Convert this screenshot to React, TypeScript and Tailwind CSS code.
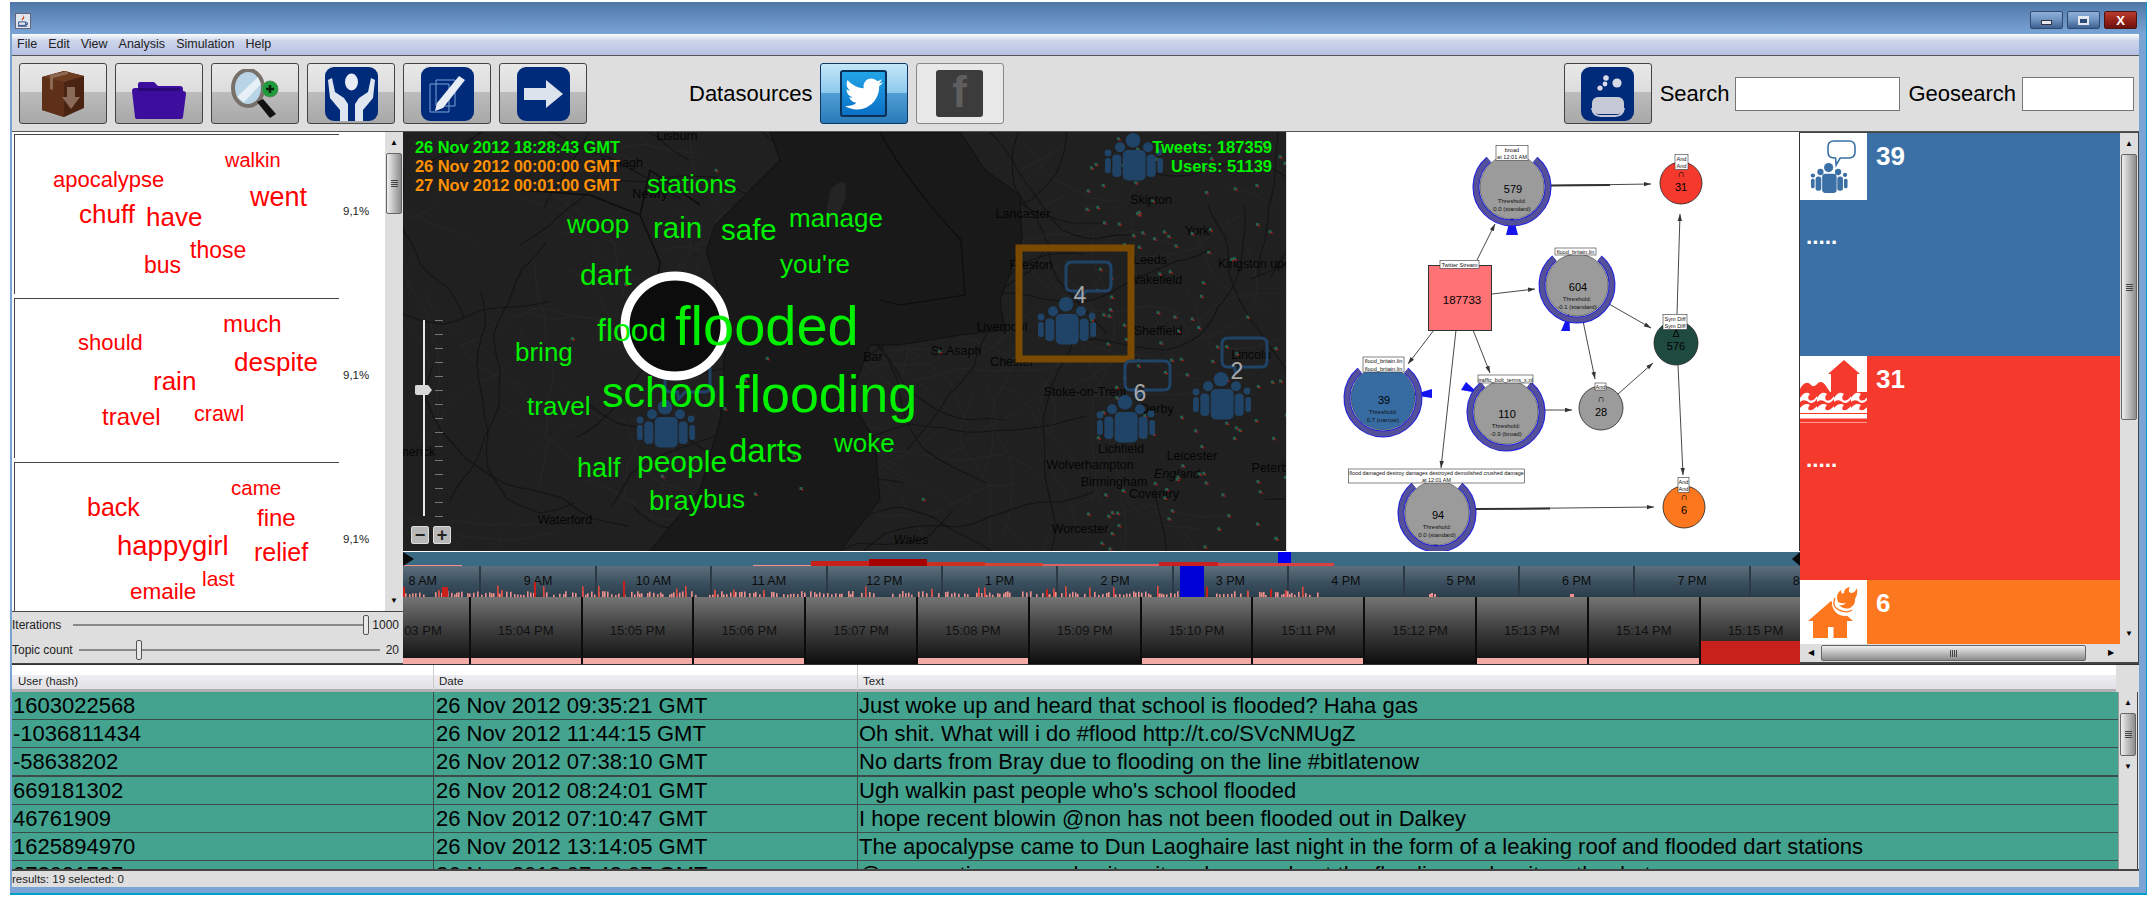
import React from 'react';
import { FaTwitter } from 'react-icons/fa';

// seeded random so the chart and map stay the same on every load
const seeded = (seed: number) => () => {
  seed = (seed * 16807) % 2147483647;
  return (seed - 1) / 2147483646;
};

type Word = [string, number, number, number];

const topics: Word[][] = [
  [['walkin', 210, 32, 20], ['apocalypse', 38, 53, 22], ['went', 235, 72, 27], ['chuff', 64, 88, 26], ['have', 131, 91, 26], ['those', 175, 123, 23], ['bus', 129, 138, 23]],
  [['much', 208, 33, 24], ['should', 63, 52, 22], ['despite', 219, 72, 26], ['rain', 138, 91, 26], ['crawl', 179, 123, 21.5], ['travel', 87, 126, 24]],
  [['came', 216, 32, 20.5], ['back', 72, 53, 25], ['fine', 242, 63, 24], ['happygirl', 102, 92, 27.5], ['relief', 239, 98, 25], ['last', 187, 123, 21], ['emaile', 115, 137, 22.5]],
];

// x, baseline, size, in page pixels
const mapWords: Word[] = [
  ['stations', 647, 193, 26], ['woop', 567, 233, 26], ['rain', 653, 238, 29.5], ['safe', 721, 240, 29.5], ['manage', 789, 227, 26],
  ["you're", 780, 273, 26], ['dart', 580, 285, 30], ['flood', 597, 341, 32], ['flooded', 675, 345, 56], ['bring', 515, 361, 26],
  ['school', 602, 407, 43], ['flooding', 735, 412, 52], ['travel', 527, 415, 26], ['darts', 729, 462, 33], ['woke', 834, 452, 26],
  ['half', 577, 478, 27], ['people', 637, 472, 30], ['bray', 649, 510, 27.5], ['bus', 703, 508, 26],
];

const mapLabels: [string, number, number, string?][] = [
  ['Lisburn', 677, 140], ['Armagh', 621, 167], ['Newry', 650, 198], ['Limerick', 412, 456], ['Waterford', 565, 524], ['Bar', 873, 361],
  ['Lancaster', 1023, 218], ['Preston', 1031, 269], ['Liverpool', 1002, 331], ['St.Asaph', 956, 355], ['Chester', 1012, 366],
  ['Stoke-on-Trent', 1085, 396], ['Derby', 1157, 413], ['Lichfield', 1121, 453], ['Leicester', 1192, 460], ['England', 1177, 478, 'i'],
  ['Wolverhampton', 1090, 469], ['Birmingham', 1114, 486], ['Coventry', 1154, 498], ['Worcester', 1080, 533], ['Wales', 911, 544, 'i'],
  ['Leeds', 1150, 264], ['Wakefield', 1155, 284], ['Sheffield', 1158, 335], ['York', 1197, 235], ['Kingston upon', 1258, 268],
  ['Lincoln', 1251, 359], ['Peterb', 1270, 472], ['Skipton', 1151, 204],
];

const tweets = [
  ['1603022568', '26 Nov 2012 09:35:21 GMT', 'Just woke up and heard that school is flooded? Haha gas'],
  ['-1036811434', '26 Nov 2012 11:44:15 GMT', 'Oh shit. What will i do #flood http://t.co/SVcNMUgZ'],
  ['-58638202', '26 Nov 2012 07:38:10 GMT', 'No darts from Bray due to flooding on the line #bitlatenow'],
  ['669181302', '26 Nov 2012 08:24:01 GMT', "Ugh walkin past people who's school flooded"],
  ['46761909', '26 Nov 2012 07:10:47 GMT', 'I hope recent blowin @non has not been flooded out in Dalkey'],
  ['1625894970', '26 Nov 2012 13:14:05 GMT', 'The apocalypse came to Dun Laoghaire last night in the form of a leaking roof and flooded dart stations'],
  ['078091797', '26 Nov 2012 07:48:07 GMT', '@non continues people sit on it and moan about the flooding and wait on the dart'],
];

const hours = ['8 AM', '9 AM', '10 AM', '11 AM', '12 PM', '1 PM', '2 PM', '3 PM', '4 PM', '5 PM', '6 PM', '7 PM', '8 PM'];
const minutes: [string, 'pink' | 'none' | 'red'][] = [
  ['15:03 PM', 'pink'], ['15:04 PM', 'pink'], ['15:05 PM', 'pink'], ['15:06 PM', 'pink'], ['15:07 PM', 'none'], ['15:08 PM', 'pink'],
  ['15:09 PM', 'none'], ['15:10 PM', 'pink'], ['15:11 PM', 'pink'], ['15:12 PM', 'none'], ['15:13 PM', 'pink'], ['15:14 PM', 'pink'], ['15:15 PM', 'red'],
];

const People = ({ x, y, s = 1, color = '#1f4468' }: { x: number; y: number; s?: number; color?: string }) => (
  <g transform={`translate(${x} ${y}) scale(${s})`} fill={color}>
    <circle cx="28" cy="7.3" r="7.3" />
    <circle cx="15" cy="14.3" r="5" />
    <circle cx="43" cy="14.3" r="5" />
    <circle cx="3" cy="20" r="3.4" />
    <circle cx="54" cy="19" r="3.4" />
    <rect x="17.7" y="17" width="23" height="30.5" rx="5" />
    <rect x="7.3" y="21.5" width="9" height="22.5" rx="4" />
    <rect x="41.7" y="21.5" width="9" height="22.5" rx="4" />
    <rect x="0" y="25" width="5.7" height="15" rx="2.5" />
    <rect x="52.3" y="25" width="5.7" height="15" rx="2.5" />
  </g>
);

const Bubble = ({ x, y, w = 45, h = 29, sw = 3, color = '#1f4468' }: { x: number; y: number; w?: number; h?: number; sw?: number; color?: string }) => (
  <path
    d={`M${x + 6} ${y}H${x + w - 6}Q${x + w} ${y} ${x + w} ${y + 6}V${y + h - 6}Q${x + w} ${y + h} ${x + w - 6} ${y + h}H${x + w * 0.45}L${x + w * 0.3} ${y + h + 7}L${x + w * 0.28} ${y + h}H${x + 6}Q${x} ${y + h} ${x} ${y + h - 6}V${y + 6}Q${x} ${y} ${x + 6} ${y}Z`}
    fill="none"
    stroke={color}
    strokeWidth={sw}
  />
);

const MapArt = () => {
  const r = seeded(4711);
  const wander = (n: number, step: number) => {
    let x = 403 + r() * 883;
    let y = 132 + r() * 419;
    let a = r() * 6.28;
    let d = `M${x.toFixed(0)} ${y.toFixed(0)}`;
    for (let i = 0; i < n; i++) {
      a += (r() - 0.5) * 0.9;
      const mx = x + Math.cos(a) * step;
      const my = y + Math.sin(a) * step;
      a += (r() - 0.5) * 0.9;
      x = mx + Math.cos(a) * step;
      y = my + Math.sin(a) * step;
      d += `Q${mx.toFixed(0)} ${my.toFixed(0)} ${x.toFixed(0)} ${y.toFixed(0)}`;
    }
    return d;
  };
  const light = Array.from({ length: 110 }, () => wander(6, 14));
  const dark = Array.from({ length: 40 }, () => wander(8, 18));
  const specks = Array.from({ length: 130 }, () => [1085 + r() * 200, 135 + r() * 415]);
  const westSpecks = Array.from({ length: 14 }, () => [560 + r() * 400, 135 + r() * 400]);
  return (
    <svg className="absolute inset-0" width="883" height="419" viewBox="403 132 883 419">
      <rect x="403" y="132" width="883" height="419" fill="#202020" />
      <g fill="none">
        {light.map((d, i) => <path key={i} d={d} stroke="#282828" strokeWidth="0.8" />)}
        {dark.map((d, i) => <path key={i} d={d} stroke="#141414" strokeWidth="1.1" />)}
      </g>
      <path d="M770 132L960 132L985 170L1020 195L1022 240L1000 300L1005 330L960 335L900 345L870 345L850 400L875 440L880 500L840 551L650 551L700 490L720 420L727 320L706 250L715 225L780 160Z" fill="#191919" stroke="#111" />
      <path d="M830 190Q850 170 845 200Q835 225 825 220Z" fill="#242424" />
      <path d="M880 132Q905 180 961 240L965 295L900 305L880 300" fill="none" stroke="#0d0d0d" strokeWidth="1.2" />
      <path d="M520 190L590 195L640 215L650 170L700 205M640 215L660 262L655 300" fill="none" stroke="#0e0e0e" strokeWidth="1.6" />
      {mapLabels.map(([t, x, y, k]) => (
        <text key={t} x={x} y={y} textAnchor="middle" fontSize="12.5" fill="#050505" fontStyle={k ? 'italic' : 'normal'}>{t}</text>
      ))}
      {[...specks, ...westSpecks].map(([x, y], i) => (
        <g key={i}>
          <rect x={x} y={y} width="3" height="3" fill="#24604f" />
          <rect x={x + 2} y={y + 2} width="2" height="1.5" fill="#a81c1c" />
        </g>
      ))}
      <Bubble x={665} y={363} />
      {/* focus circle */}
      <circle cx="675" cy="326" r="50" fill="#0c0c0c" stroke="#fff" strokeWidth="9" />
      {/* markers */}
      <People x={637} y={400} />
      <People x={1105} y={133} />
      <rect x="1019" y="248" width="112" height="111" fill="none" stroke="#7a4a00" strokeWidth="7" />
      <Bubble x={1066} y={262} />
      <People x={1038} y={297} />
      <Bubble x={1125} y={361} />
      <People x={1097} y={395} />
      <Bubble x={1222} y={338} />
      <People x={1193} y={372} />
      <g fill="#a8a8a8" fontSize="23" textAnchor="middle">
        <text x="1080" y="303">4</text>
        <text x="1140" y="401">6</text>
        <text x="1237" y="379">2</text>
      </g>
      {/* zoom slider */}
      <rect x="423" y="320" width="2" height="196" fill="#e6e6e6" />
      {Array.from({ length: 15 }, (_, i) => (
        <rect key={i} x="435" y={320 + i * 14} width="8" height="1" fill="#777" />
      ))}
      <path d="M415 386Q415 385 417 385H428L432 390L428 395H417Q415 395 415 393Z" fill="#d8d8d8" />
    </svg>
  );
};

const ringArc = (cx: number, cy: number, r: number) => {
  const dx = r * Math.sin(0.7);
  const dy = r * Math.cos(0.7);
  return `M${cx + dx} ${cy - dy}A${r} ${r} 0 1 1 ${cx - dx} ${cy - dy}`;
};

const Threshold = ({ cx, cy, r, fill, n, a, b }: { cx: number; cy: number; r: number; fill: string; n: string; a: string; b: string }) => (
  <g>
    <path d={ringArc(cx, cy, r + 4)} fill="none" stroke="#2020e0" strokeWidth="7" />
    <path d={ringArc(cx, cy, r + 4)} fill="none" stroke="#55509a" strokeWidth="5" />
    <circle cx={cx} cy={cy} r={r} fill={fill} stroke="#222" strokeWidth="0.5" />
    <text x={cx + 1} y={cy + 6} textAnchor="middle" fontSize="11" fill="#000">{n}</text>
    <text x={cx} y={cy + 16} textAnchor="middle" fontSize="6" fill="#111">{a}</text>
    <text x={cx} y={cy + 24} textAnchor="middle" fontSize="6" fill="#111">{b}</text>
  </g>
);

const SetNode = ({ cx, cy, r, fill, sym, n, symY, nY }: { cx: number; cy: number; r: number; fill: string; sym: string; n: string; symY: number; nY: number }) => (
  <g>
    <circle cx={cx} cy={cy} r={r} fill={fill} stroke="#222" strokeWidth="0.8" />
    <text x={cx} y={symY} textAnchor="middle" fontSize="10" fill="#000">{sym}</text>
    <text x={cx} y={nY} textAnchor="middle" fontSize="11" fill="#000">{n}</text>
  </g>
);

const Label = ({ x, y, w, h, lines }: { x: number; y: number; w: number; h: number; lines: string[] }) => (
  <g>
    <rect x={x} y={y} width={w} height={h} fill="#fff" stroke="#333" strokeWidth="0.6" />
    {lines.map((t, i) => (
      <text key={i} x={x + w / 2} y={y + (h / lines.length) * (i + 1) - 1.5} textAnchor="middle" fontSize={w > 150 ? 5.4 : 5.6} fill="#111">{t}</text>
    ))}
  </g>
);

const Edge = ({ x1, y1, x2, y2 }: { x1: number; y1: number; x2: number; y2: number }) => {
  const a = Math.atan2(y2 - y1, x2 - x1);
  const p = (d: number, o: number) => `${x2 - Math.cos(a) * d - Math.sin(a) * o} ${y2 - Math.sin(a) * d + Math.cos(a) * o}`;
  return (
    <g>
      <line x1={x1} y1={y1} x2={x2} y2={y2} stroke="#333" strokeWidth="0.9" />
      <path d={`M${x2} ${y2}L${p(7, 2.2)}L${p(7, -2.2)}Z`} fill="#333" />
    </g>
  );
};

const Diagram = () => (
  <svg width="509" height="419" viewBox="0 2 509 419" className="block">
    <Edge x1={261} y1={55.5} x2={361} y2={54} />
    <line x1="261" y1="55.5" x2="320" y2="55" stroke="#333" strokeWidth="2" />
    <Edge x1={187} y1={130} x2={205} y2={94} />
    <Edge x1={202} y1={164} x2={245} y2={159} />
    <Edge x1={144} y1={200} x2={118} y2={234} />
    <Edge x1={183} y1={200} x2={200} y2={243} />
    <Edge x1={166} y1={200} x2={151} y2={338} />
    <Edge x1={293} y1={191} x2={305} y2={249} />
    <Edge x1={319} y1={174} x2={361} y2={198} />
    <Edge x1={254} y1={280} x2={282} y2={280} />
    <Edge x1={328} y1={264} x2={363} y2={233} />
    <Edge x1={387} y1={184} x2={390} y2={84} />
    <Edge x1={388} y1={235} x2={393} y2={345} />
    <Edge x1={185} y1={379} x2={364} y2={377} />
    <line x1="185" y1="379" x2="260" y2="378.5" stroke="#333" strokeWidth="2" />

    <rect x="138.5" y="135.5" width="63" height="65" fill="#ff7276" stroke="#333" />
    <text x="172" y="174" textAnchor="middle" fontSize="11.5" fill="#000">187733</text>
    <Label x={150} y={130.5} w={39} h={8} lines={['Twitter Stream']} />

    <path d="M222 82L216 105H228Z" fill="#1414f0" />
    <Threshold cx={222} cy={57} r={32} fill="#9b9b9b" n="579" a="Threshold:" b="0.0 (standard)" />
    <Label x={206} y={15.5} w={32} h={15} lines={['broad', 'at 12:01 AM']} />

    <path d="M279 182L271 201H280Z" fill="#1414f0" />
    <Threshold cx={287} cy={155} r={31} fill="#9b9b9b" n="604" a="Threshold:" b="-0.1 (standard)" />
    <Label x={265} y={118} w={41} h={7} lines={['flood_britain.lin']} />

    <path d="M122 265L142 259V268Z" fill="#1414f0" />
    <Threshold cx={93} cy={268} r={32} fill="#376ca3" n="39" a="Threshold:" b="0.7 (narrow)" />
    <Label x={73} y={227} w={41} h={15} lines={['flood_britain.lin', 'flood_britain.lin']} />

    <path d="M188 263L176 252L171 260Z" fill="#1414f0" />
    <Threshold cx={216} cy={282} r={32} fill="#9b9b9b" n="110" a="Threshold:" b="-0.9 (broad)" />
    <Label x={188} y={245} w={55} h={8} lines={['traffic_bolt_terms_x.nl']} />

    <SetNode cx={311} cy={278} r={22} fill="#9b9b9b" sym="∩" n="28" symY={272} nY={286} />
    <Label x={305} y={253} w={11} h={7} lines={['And']} />

    <path d="M146 408L142 421H150Z" fill="#1414f0" />
    <Threshold cx={147} cy={383} r={32} fill="#9b9b9b" n="94" a="Threshold:" b="0.0 (standard)" />
    <Label x={58.5} y={339} w={176} h={14} lines={['flood damaged destroy damages destroyed demolished crushed damage', 'at 12:01 AM']} />

    <SetNode cx={391} cy={53} r={21} fill="#f5392d" sym="∩" n="31" symY={47} nY={61} />
    <Label x={385} y={24.5} w={13} h={15} lines={['And', 'And']} />
    <SetNode cx={386} cy={213} r={22} fill="#1e4a40" sym="Δ" n="576" symY={207} nY={220} />
    <Label x={373} y={184.5} w={24} h={15} lines={['Sym Diff', 'Sym Diff']} />
    <SetNode cx={394} cy={377} r={21} fill="#fd771f" sym="∩" n="6" symY={370} nY={384} />
    <Label x={388} y={347.5} w={11} h={15} lines={['And', 'And']} />
  </svg>
);

const Scrollbar = ({ thumb }: { thumb: string }) => (
  <div className="w-[18px] shrink-0 flex flex-col items-center bg-[#dedede] text-[8px] text-black leading-none">
    <div className="h-[21px] w-full flex items-center justify-center">▲</div>
    <div className={`${thumb} w-[16px] rounded-[2px] border border-[#666] bg-[linear-gradient(90deg,#eeeeee,#b8b8b8_55%,#8c8c8c)] flex flex-col items-center justify-center gap-[1px]`}>
      {[0, 1, 2, 3].map((i) => <div key={i} className="h-[1px] w-[7px] bg-[#444]" />)}
    </div>
    <div className="flex-1" />
    <div className="h-[21px] w-full flex items-center justify-center">▼</div>
  </div>
);

const Slider = ({ label, value, labelW, valueW, thumb }: { label: string; value: string; labelW: string; valueW: string; thumb: string }) => (
  <div className="h-[25.5px] flex items-center text-[12px] leading-none text-[#222]">
    <div className={`${labelW} shrink-0`}>{label}</div>
    <div className="relative flex-1 h-[2px] bg-[#8a8a8a]">
      <div className={`absolute ${thumb} top-[-9px] h-[20px] w-[6px] rounded-[2px] border border-[#555] bg-[#e8e8e8]`} />
    </div>
    <div className={`${valueW} text-right`}>{value}</div>
  </div>
);

const ToolButton = ({ children, className }: { children: React.ReactNode; className?: string }) => (
  <button className={`w-[88px] h-[61px] shrink-0 flex items-center justify-center rounded-[3px] border border-[#444] bg-[linear-gradient(#e8e8e8_0%,#dcdcdc_48%,#bcbcbc_48%,#a8a8a8_100%)] ${className ?? ''}`}>
    {children}
  </button>
);

const SymbolBox = ({ children }: { children: React.ReactNode }) => (
  <svg width="53" height="54" viewBox="0 0 53 54">
    <rect width="53" height="54" rx="9" fill="#002a7a" />
    {children}
  </svg>
);

const histogram = () => {
  const r = seeded(99);
  const bars: { x: number; h: number; c: string }[] = [];
  for (let x = 403; x < 1320; x += 2 + Math.floor(r() * 3)) {
    if (r() < 0.22) continue;
    bars.push({ x, h: 2 + r() * 4, c: '#f0908c' });
    if (r() < 0.12) bars.push({ x, h: 6 + r() * 6, c: '#e04840' });
  }
  return bars;
};

const Timeline = () => (
  <div className="relative h-[112px] overflow-hidden">
    <div className="h-[14px] bg-[#3b6a85]" />
    <div className="h-[31px] flex -ml-[37px] bg-[linear-gradient(#5e6f7b,#3a4f5e_55%,#2a3d4b)]">
      {hours.map((h) => (
        <div key={h} className="w-[115.4px] shrink-0 border-r-2 border-[#2a3944] flex items-center justify-center text-[12.5px] text-[#0c0c0c] leading-none">
          {h}
        </div>
      ))}
    </div>
    <div className="h-[67px] flex -ml-[44px]">
      {minutes.map(([m, state]) => (
        <div key={m} className="relative w-[111.8px] shrink-0 border-r-2 border-[#0c0c0c] flex items-center justify-center text-[13px] text-[#111] leading-none bg-[linear-gradient(#747474,#3c3c3c_50%,#0e0e0e)]">
          {state === 'pink' && <div className="absolute left-0 right-0 bottom-0 h-[6px] bg-[#f4aaa6]" />}
          {state === 'red' && <div className="absolute left-0 right-0 bottom-0 h-[23px] bg-[#c8201a]" />}
          <span className="relative">{m}</span>
        </div>
      ))}
    </div>
    <svg className="absolute left-0 top-0" width="1397" height="45" viewBox="403 552 1397 45">
      {histogram().map((b, i) => <rect key={i} x={b.x} y={597 - b.h} width="1.6" height={b.h} fill={b.c} />)}
      {[[1429, 3], [1431, 4], [1434, 3], [1570, 3], [1572, 3]].map(([x, h]) => <rect key={x} x={x} y={597 - h} width="2" height={h} fill="#f0908c" />)}
      {[[403, 10], [442, 10], [444, 10], [446, 10], [534, 15], [623, 16], [1046, 8], [1206, 10], [1270, 8]].map(([x, h]) => <rect key={x} x={x} y={597 - h} width="2" height={h} fill="#c8201a" />)}
      <rect x="403" y="565" width="59" height="1" fill="#f0908c" />
      <rect x="753" y="565" width="58" height="1" fill="#f0908c" />
      <rect x="811" y="561" width="58" height="5" fill="#c8201a" />
      <rect x="869" y="559" width="58" height="7" fill="#a80000" />
      <rect x="927" y="562" width="58" height="4" fill="#c83020" />
      <rect x="985" y="563" width="58" height="3" fill="#d84030" />
      <rect x="1043" y="564" width="116" height="2" fill="#e06060" />
      <rect x="1159" y="562" width="59" height="4" fill="#c82020" />
      <rect x="1218" y="563" width="116" height="3" fill="#d84040" />
      <rect x="1180" y="566" width="24" height="31" fill="#0000d8" />
      <rect x="1278" y="552" width="13" height="11" fill="#0000f0" />
      <path d="M403 552L414 559L403 566Z" fill="#0a0a0a" />
      <path d="M1800 552L1792 559L1800 566Z" fill="#0a0a0a" />
    </svg>
  </div>
);

const StatCard = ({ color, count, icon, h, dots }: { color: string; count: string; icon: React.ReactNode; h: string; dots?: boolean }) => (
  <div className={`${h} overflow-hidden ${color} text-white`}>
    <div className="flex">
      <div className="w-[67px] h-[67px] bg-white shrink-0">{icon}</div>
      <div className="pl-[9px] pt-[10px] text-[26px] font-bold leading-none">{count}</div>
    </div>
    {dots && <div className="ml-[6px] mt-[26px] text-[22.5px] font-bold leading-none">.....</div>}
  </div>
);

export default function App() {
  return (
    <div className="w-[2153px] h-[903px] bg-white overflow-hidden pl-[10px] pt-[2px] font-['Liberation_Sans',Arial,sans-serif]">
      <div className="w-[2137px] h-[893px] border-r border-b-2 border-[#00a0c8] flex flex-col">
        {/* title bar */}
        <div className="h-[32px] shrink-0 flex justify-between pl-[5px] pr-[9px] pt-[9px] bg-[linear-gradient(#4f76a6,#7aa4d6)]">
          <svg width="16" height="16" viewBox="0 0 16 16" className="mt-[2px] bg-[#dfe6f0] border border-[#667]">
            <path d="M8 1Q11 4 8 6Q7 7 8 8Q5 6 8 4Q9 3 8 1Z" fill="#d8401a" />
            <path d="M3 9H11V13H3Z" fill="none" stroke="#23407a" />
            <path d="M11 10H13V12H11M2 14H13" fill="none" stroke="#23407a" />
          </svg>
          <div className="flex gap-[4px]">
            <div className="w-[33px] h-[18px] rounded-[2px] border border-[#2f4a70] bg-[linear-gradient(#8fb0d8,#6d92c0_50%,#3c6192)] flex items-center justify-center">
              <div className="w-[11px] h-[5px] mt-[4px] bg-[#e4e8ee] border border-[#334]" />
            </div>
            <div className="w-[33px] h-[18px] rounded-[2px] border border-[#2f4a70] bg-[linear-gradient(#8fb0d8,#6d92c0_50%,#3c6192)] flex items-center justify-center">
              <div className="w-[11px] h-[9px] border-2 border-t-[3px] border-[#e4e8ee] bg-[#2a4a78]" />
            </div>
            <div className="w-[33px] h-[18px] rounded-[2px] border border-[#4a1410] bg-[linear-gradient(#b83c30,#962218_50%,#6e120e)] flex items-center justify-center text-white text-[13px] font-bold leading-none">
              X
            </div>
          </div>
        </div>

        <div className="flex-1 min-h-0 flex flex-col border-l-2 border-r-[7px] border-b-[6px] border-[#7ba3d4]">
          {/* menu */}
          <div className="h-[22px] shrink-0 flex items-center gap-[11px] pl-[5px] text-[12.5px] text-[#222] border-b border-[#555] bg-[linear-gradient(#fbfcfe_0%,#cfd7ec_30%,#b6c1e2_100%)]">
            {['File', 'Edit', 'View', 'Analysis', 'Simulation', 'Help'].map((m) => <span key={m}>{m}</span>)}
          </div>

          {/* toolbar */}
          <div className="h-[76px] shrink-0 flex items-center pl-[7px] pr-[5px] gap-[8px] bg-[#dedede] text-[22px] text-black border-b border-[#555]">
            <ToolButton>
              <svg width="50" height="48" viewBox="0 0 50 48">
                <path d="M4 7L26 1L46 6V38L26 47L4 40Z" fill="#4a2412" />
                <path d="M4 7L26 12V47L4 40Z" fill="#5e3018" />
                <path d="M4 7L26 1L46 6L26 12Z" fill="#6d3d22" />
                <path d="M12 5L30 1V4L15 8V20L12 19Z" fill="#8a6a52" />
                <path d="M29 17H37V27H42L33 39L24 27H29Z" fill="#8a6a58" />
              </svg>
            </ToolButton>
            <ToolButton>
              <svg width="54" height="40" viewBox="0 0 54 40" className="mt-[14px]">
                <path d="M3 36L0 10Q0 7 3 7H6V3Q6 1 8 1H22L26 5H48Q51 5 51 8V10Q54 10 54 13L51 36Q51 38 48 38H6Q3 38 3 36Z" fill="#3d0e9e" />
                <path d="M6 7H48V10H6Z" fill="#2a0876" />
              </svg>
            </ToolButton>
            <ToolButton>
              <svg width="52" height="50" viewBox="0 0 52 50">
                <ellipse cx="19" cy="19" rx="15" ry="18" fill="#b9d4e6" stroke="#77716a" strokeWidth="4" />
                <path d="M8 28L29 8L32 15L15 33Z" fill="#e6f0f6" />
                <path d="M28 33L34 30L47 45L41 49Z" fill="#111" />
                <circle cx="41" cy="20" r="8" fill="#1f9a3c" stroke="#5a8a5a" />
                <path d="M37 20H45M41 16V24" stroke="#08200c" strokeWidth="2.4" />
              </svg>
            </ToolButton>
            <ToolButton>
              <SymbolBox>
                <ellipse cx="26.5" cy="15" rx="6.5" ry="8.5" fill="#e8ecf4" />
                <path d="M3 13L7 11L10 25L19 31L23 37V54H15V43L5 31ZM50 13L46 11L43 25L34 31L30 37V54H38V43L48 31Z" fill="#e0e6f0" />
              </SymbolBox>
            </ToolButton>
            <ToolButton>
              <SymbolBox>
                <path d="M15 13H34V39H15ZM9 17H28V45H9Z" fill="none" stroke="#7aa0d4" strokeWidth="1" />
                <path d="M38 9L44 13L22 41L14 44L16 36Z" fill="#e8ecf4" />
              </SymbolBox>
            </ToolButton>
            <ToolButton>
              <SymbolBox>
                <path d="M7 21H29V13L46 27L29 41V33H7Z" fill="#dde3ec" />
              </SymbolBox>
            </ToolButton>

            <span className="ml-[94px]">Datasources</span>
            <button className="ml-[-1px] w-[88px] h-[61px] flex items-center justify-center rounded-[3px] border border-[#0a3a6a] bg-[linear-gradient(#c4e6f8,#8cc8ec_50%,#4f9ed6_50%,#2a7ab8)]">
              <div className="w-[47px] h-[47px] rounded-[3px] border-2 border-[#0c2f55] bg-[linear-gradient(#22a4e8,#0a70c4)] flex items-center justify-center text-white">
                <FaTwitter size={38} />
              </div>
            </button>
            <button className="w-[88px] h-[61px] flex items-center justify-center rounded-[3px] border border-[#888] bg-[#e8e8e8]">
              <div className="w-[47px] h-[47px] rounded-[3px] bg-[#3c3c3c] flex items-end justify-center text-[#5e5e5e] text-[44px] font-bold leading-[50px]">f</div>
            </button>

            <ToolButton className="ml-auto">
              <SymbolBox>
                <circle cx="36" cy="16" r="4.6" fill="#d6dbe6" />
                <circle cx="25" cy="11" r="2.8" fill="#d6dbe6" />
                <circle cx="24" cy="17" r="2.4" fill="#d6dbe6" />
                <circle cx="19" cy="21" r="2.6" fill="#d6dbe6" />
                <rect x="11" y="30" width="32" height="17" rx="6" fill="#c6cad6" />
                <path d="M11 41Q12 49 20 49H34Q42 49 43 41" fill="none" stroke="#c6cad6" strokeWidth="2" />
              </SymbolBox>
            </ToolButton>
            <span>Search</span>
            <input className="w-[165px] h-[34px] -ml-[2px] bg-white border border-[#777] outline-none" />
            <span>Geosearch</span>
            <input className="w-[112px] h-[34px] -ml-[2px] bg-white border border-[#777] outline-none" />
          </div>

          {/* main area */}
          <div className="h-[532px] shrink-0 flex bg-white">
            {/* topics */}
            <div className="w-[391px] shrink-0 flex flex-col">
              <div className="h-[479px] flex bg-white">
                <div className="flex-1 overflow-hidden pt-[2px] pl-[2px]">
                  {topics.map((words, i) => (
                    <div key={i} className="h-[164px] flex">
                      <div className="relative w-[325px] h-[160px] shrink-0 border-t border-l border-[#444]">
                        {words.map(([t, x, b, s]) => (
                          <span key={t} className="absolute whitespace-nowrap leading-none text-[#ff0000]" style={{ left: x, top: b - s * 0.8465, fontSize: s }}>{t}</span>
                        ))}
                      </div>
                      <div className="ml-[4px] mt-[72px] text-[11.5px] text-[#222] leading-none">9,1%</div>
                    </div>
                  ))}
                </div>
                <Scrollbar thumb="h-[61px]" />
              </div>
              <div className="h-[53px] bg-[#dedede] border-t border-b border-[#444] pr-[4px]">
                <Slider label="Iterations" value="1000" labelW="w-[61px]" valueW="w-[30px]" thumb="right-0" />
                <Slider label="Topic count" value="20" labelW="w-[67px]" valueW="w-[19px]" thumb="left-[57px]" />
              </div>
            </div>

            {/* map, diagram, timeline */}
            <div className="w-[1397px] shrink-0 flex flex-col">
              <div className="h-[420px] shrink-0 flex">
                <div className="relative w-[883px] h-[419px] overflow-hidden bg-[#202020]">
                  <MapArt />
                  {mapWords.map(([t, x, b, s]) => (
                    <span key={t + x} className="absolute whitespace-nowrap leading-none text-[#00f000]" style={{ left: x - 403, top: b - 132 - s * 0.8465, fontSize: s }}>{t}</span>
                  ))}
                  <div className="absolute left-[12px] top-[6px] text-[16.5px] font-bold leading-[19px] tracking-[-0.1px]">
                    <div className="text-[#00f000]">26 Nov 2012 18:28:43 GMT</div>
                    <div className="text-[#ff9000]">26 Nov 2012 00:00:00 GMT</div>
                    <div className="text-[#ff9000]">27 Nov 2012 00:01:00 GMT</div>
                  </div>
                  <div className="absolute right-[14px] top-[6px] text-right text-[16.5px] font-bold leading-[19px] text-[#00f000]">
                    <div>Tweets: 187359</div>
                    <div>Users: 51139</div>
                  </div>
                  <div className="absolute left-[8px] top-[394px] flex gap-[4px]">
                    <div className="w-[18px] h-[18px] rounded-[2px] border border-[#ddd] bg-[#b8b8b8] flex items-center justify-center text-[18px] font-bold leading-none text-[#222]">−</div>
                    <div className="w-[18px] h-[18px] rounded-[2px] border border-[#ddd] bg-[#b8b8b8] flex items-center justify-center text-[18px] font-bold leading-none text-[#222]">+</div>
                  </div>
                </div>
                <div className="w-[4px] bg-white border-l border-[#ddd]" />
                <div className="w-[510px] h-[419px] bg-white border-r border-[#333]">
                  <Diagram />
                </div>
              </div>
              <Timeline />
            </div>

            {/* result cards */}
            <div className="w-[339px] shrink-0 flex flex-col border-r border-[#444] border-b-2 border-t">
              <div className="h-[511px] flex">
                <div className="flex-1 flex flex-col overflow-hidden">
                  <StatCard
                    color="bg-[#3a70a6]"
                    h="h-[223px] shrink-0"
                    count="39"
                    dots
                    icon={
                      <svg width="67" height="67" viewBox="0 0 67 67">
                        <Bubble x={28} y={8} w={27} h={17} sw={1.6} color="#3a70a6" />
                        <People x={11} y={30} s={0.63} color="#3a70a6" />
                      </svg>
                    }
                  />
                  <StatCard
                    color="bg-[#f5392d]"
                    h="h-[224px] shrink-0"
                    count="31"
                    dots
                    icon={
                      <svg width="67" height="67" viewBox="0 0 67 67">
                        <path d="M44 4L60 18H57V36H31V18H28Z" fill="#f5392d" />
                        <path d="M0 58V33Q5 24 10 28Q14 33 18 27Q22 24 26 30L30 36H67V58Z" fill="#f5392d" />
                        {[0, 17, 34, 51].map((x) => (
                          <path key={x} d={`M${x} 42Q${x + 5} 34 ${x + 10} 38Q${x + 7} 41 ${x + 9} 44Q${x + 13} 46 ${x + 17} 40V43Q${x + 12} 50 ${x + 7} 45Q${x + 3} 43 ${x} 46Z`} fill="#fff" />
                        ))}
                        {[0, 17, 34, 51].map((x) => (
                          <path key={x} d={`M${x} 52Q${x + 5} 46 ${x + 10} 49Q${x + 7} 52 ${x + 9} 54Q${x + 13} 55 ${x + 17} 50V57H${x}Z`} fill="#fff" />
                        ))}
                        <rect x="0" y="62.5" width="67" height="4" fill="#f5392d" />
                      </svg>
                    }
                  />
                  <StatCard
                    color="bg-[#fd771f]"
                    h="h-[64px] shrink-0"
                    count="6"
                    icon={
                      <svg width="67" height="67" viewBox="0 0 67 67">
                        <path d="M8 41L31 21L53 41H47V58H33.5V47H28V58H13V41Z" fill="#fd771f" />
                        <circle cx="45" cy="23" r="13" fill="#fff" />
                        <path d="M35 18Q31 28 42 31Q48 33 52 30" fill="none" stroke="#fd771f" strokeWidth="1.3" />
                        <path d="M38 22Q35 14 41 10Q41 15 44 13Q44 8 50 7Q47 12 51 13Q55 13 57 8Q58 14 55 19Q56 24 50 28Q44 30 39 25Q43 26 46 23Q42 24 38 22Z" fill="#fd771f" />
                      </svg>
                    }
                  />
                </div>
                <Scrollbar thumb="h-[266px]" />
              </div>
              <div className="flex-1 flex items-center bg-[#dedede] text-[8px] leading-none text-black">
                <div className="w-[21px] text-center">◀</div>
                <div className="w-[265px] h-[16px] rounded-[2px] border border-[#666] bg-[linear-gradient(#eeeeee,#b8b8b8_55%,#8c8c8c)] flex items-center justify-center gap-[1px]">
                  {[0, 1, 2, 3].map((i) => <div key={i} className="w-[1px] h-[7px] bg-[#444]" />)}
                </div>
                <div className="flex-1 text-right pr-[24px]">▶</div>
              </div>
            </div>
          </div>

          {/* tweets table */}
          <div className="h-[28px] shrink-0 flex bg-[#dedede] border-t border-[#333] text-[11.5px] text-[#222]">
            <div className="w-[2104px] grid grid-cols-[422px_424px_1fr] border-b-[3px] border-[#b0b0b0] bg-[linear-gradient(#ffffff_0%,#ffffff_40%,#eeeef2_42%,#e2e2e6_100%)]">
              <div className="pl-[6px] pt-[8px] border-r border-[#ccc]">User (hash)</div>
              <div className="pl-[5px] pt-[8px] border-r border-[#ccc]">Date</div>
              <div className="pl-[5px] pt-[8px]">Text</div>
            </div>
          </div>
          <div className="h-[179px] shrink-0 flex border-b-2 border-[#444] bg-[#dedede]">
            <div className="w-[2106px] overflow-hidden bg-[#43a38f]">
              {tweets.map((t, i) => (
                <div key={t[0]} className={`grid grid-cols-[422px_424px_1fr] text-[22px] leading-[28px] text-black border-[#3c4c48] ${i === 2 ? 'h-[29px] border-b-2' : 'h-[28px] border-b'}`}>
                  <div className="pl-[1px] border-r border-[#3c4c48] whitespace-nowrap">{t[0]}</div>
                  <div className="pl-[2px] border-r border-[#3c4c48] whitespace-nowrap">{t[1]}</div>
                  <div className="pl-[1px] whitespace-nowrap">{t[2]}</div>
                </div>
              ))}
            </div>
            <div className="border-l border-[#999] border-r border-r-[#444]">
              <Scrollbar thumb="h-[43px]" />
            </div>
          </div>
          <div className="h-[16px] shrink-0 bg-[#dedede] text-[11.5px] leading-[16px] text-[#222]">results: 19 selected: 0</div>
        </div>
      </div>
    </div>
  );
}
